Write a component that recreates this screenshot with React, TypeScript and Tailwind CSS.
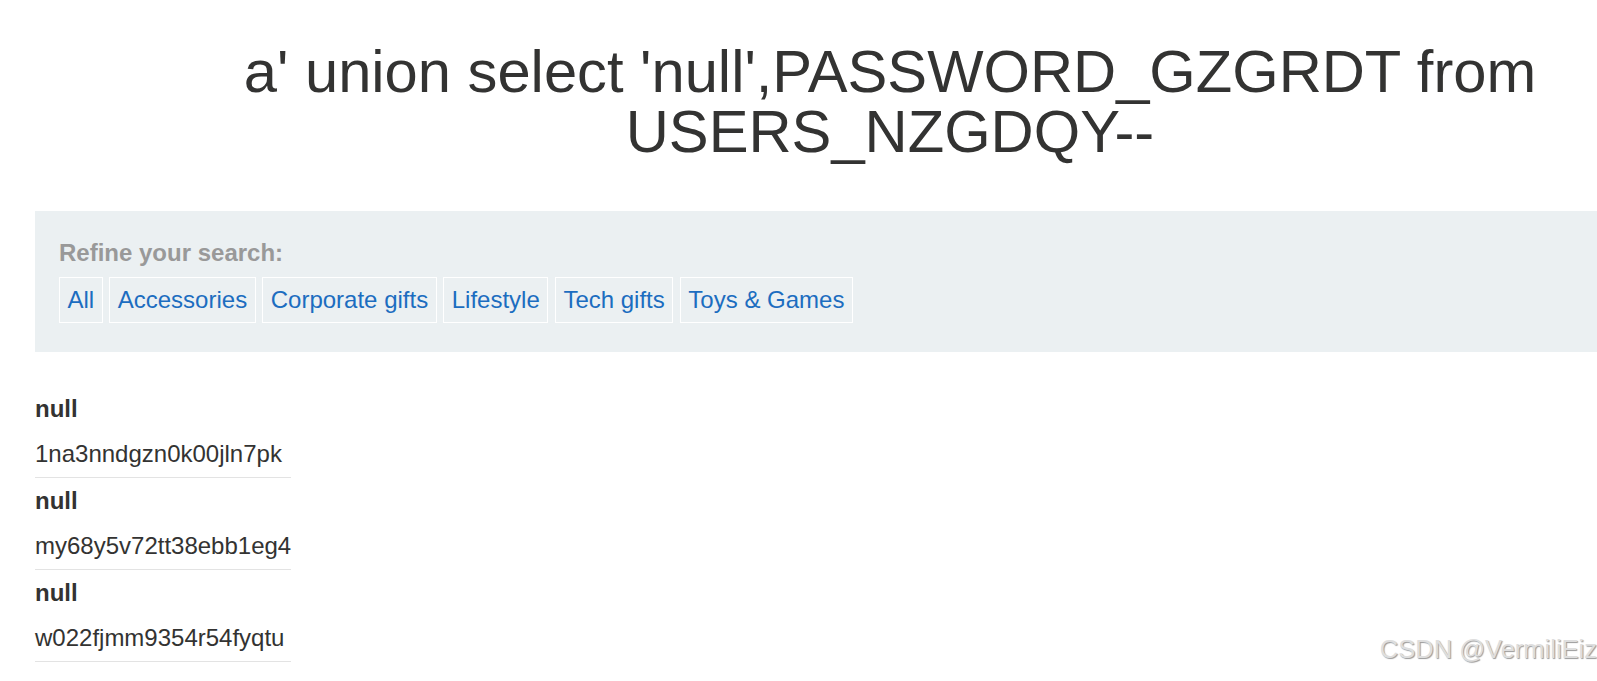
const categories = ['All', 'Accessories', 'Corporate gifts', 'Lifestyle', 'Tech gifts', 'Toys & Games'];

const results = [
    { title: 'null', value: '1na3nndgzn0k00jln7pk' },
    { title: 'null', value: 'my68y5v72tt38ebb1eg4' },
    { title: 'null', value: 'w022fjmm9354r54fyqtu' },
];

export default function App() {
    return (
        <div className="relative h-screen w-full overflow-hidden bg-white font-['Liberation_Sans',Arial,sans-serif] text-[#333332]">
            <div className="w-[1710px] ml-[35px] pt-[42px]">
                {/* Page title */}
                <h1 className="text-center text-[59.7px] leading-[60px] font-normal">
                    a' union select 'null',PASSWORD_GZGRDT from USERS_NZGDQY--
                </h1>

                {/* Filter panel */}
                <section className="mt-[49px] bg-[#ebf0f2] px-6 pt-[28px] pb-[29px]">
                    <div className="text-[24px] leading-[28px] font-bold text-[#999999]">Refine your search:</div>
                    <div className="mt-[10px] flex gap-[6.6px]">
                        {categories.map((c) => (
                            <a
                                key={c}
                                className="border border-white px-[7.5px] py-2 text-[24px] leading-[28px] text-[#1c6dc0] whitespace-nowrap"
                            >
                                {c}
                            </a>
                        ))}
                    </div>
                </section>

                {/* Results */}
                <div className="mt-[34px] w-fit">
                    {results.map((r, i) => (
                        <div key={i} className="border-b border-[#e3e3e3] pt-[9px] pb-[9px] text-[24px] leading-[28px]">
                            <div className="font-bold">{r.title}</div>
                            <div className="mt-[17px]">{r.value}</div>
                        </div>
                    ))}
                </div>
            </div>

            {/* Watermark */}
            <div className="absolute right-0 top-[634px] text-[25.5px] leading-[30px] text-[#dedede] [text-shadow:1px_1px_1px_#9a9a9a] whitespace-nowrap">
                CSDN @VermiliEiz
            </div>
        </div>
    );
}
